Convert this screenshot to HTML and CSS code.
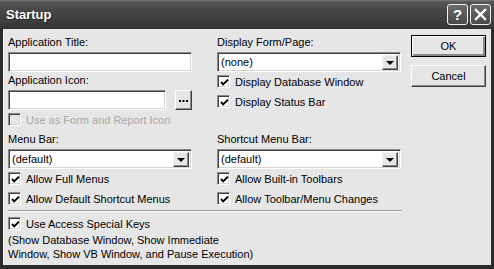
FILE: index.html
```html
<!DOCTYPE html>
<html lang="en">
<head>
    <meta charset="UTF-8">
    <title>Startup</title>
    <link rel="stylesheet" href="styles.css">
</head>
<body>
    <div class="window">
        <div class="titlebar">
            <span class="title">Startup</span>
            <div class="caption-buttons">
                <span class="cap-btn">?</span>
                <span class="cap-btn">
                    <svg width="13" height="13" viewBox="0 0 13 13">
                        <path d="M2 2 L11 11 M11 2 L2 11" stroke="#fff" stroke-width="2.4" stroke-linecap="square"/>
                    </svg>
                </span>
            </div>
        </div>

        <div class="client">
            <div class="main">
                <div class="cols">
                    <div class="col">
                        <div class="lbl">Application Title:</div>
                        <div class="field"></div>
                        <div class="lbl gap-sm">Application Icon:</div>
                        <div class="icon-row">
                            <div class="field"></div>
                            <span class="btn-dots">
                                <svg width="9" height="2" viewBox="0 0 9 2"><rect x="0" y="0" width="2" height="2"/><rect x="3.5" y="0" width="2" height="2"/><rect x="7" y="0" width="2" height="2"/></svg>
                            </span>
                        </div>
                        <div class="check disabled">
                            <span class="box"></span>Use as Form and Report Icon
                        </div>
                    </div>

                    <div class="col">
                        <div class="lbl">Display Form/Page:</div>
                        <div class="combo"><span class="val">(none)</span><span class="arrow"></span></div>
                        <div class="check first">
                            <span class="box checked"><svg width="9" height="9" viewBox="0 0 9 9"><path d="M1 4 L3.2 6.4 L8 1.6" fill="none" stroke="#000" stroke-width="2"/></svg></span>Display Database Window
                        </div>
                        <div class="check">
                            <span class="box checked"><svg width="9" height="9" viewBox="0 0 9 9"><path d="M1 4 L3.2 6.4 L8 1.6" fill="none" stroke="#000" stroke-width="2"/></svg></span>Display Status Bar
                        </div>
                    </div>

                    <div class="col">
                        <div class="lbl">Menu Bar:</div>
                        <div class="combo"><span class="val">(default)</span><span class="arrow"></span></div>
                        <div class="check first">
                            <span class="box checked"><svg width="9" height="9" viewBox="0 0 9 9"><path d="M1 4 L3.2 6.4 L8 1.6" fill="none" stroke="#000" stroke-width="2"/></svg></span>Allow Full Menus
                        </div>
                        <div class="check">
                            <span class="box checked"><svg width="9" height="9" viewBox="0 0 9 9"><path d="M1 4 L3.2 6.4 L8 1.6" fill="none" stroke="#000" stroke-width="2"/></svg></span>Allow Default Shortcut Menus
                        </div>
                    </div>

                    <div class="col">
                        <div class="lbl">Shortcut Menu Bar:</div>
                        <div class="combo"><span class="val">(default)</span><span class="arrow"></span></div>
                        <div class="check first">
                            <span class="box checked"><svg width="9" height="9" viewBox="0 0 9 9"><path d="M1 4 L3.2 6.4 L8 1.6" fill="none" stroke="#000" stroke-width="2"/></svg></span>Allow Built-in Toolbars
                        </div>
                        <div class="check">
                            <span class="box checked"><svg width="9" height="9" viewBox="0 0 9 9"><path d="M1 4 L3.2 6.4 L8 1.6" fill="none" stroke="#000" stroke-width="2"/></svg></span>Allow Toolbar/Menu Changes
                        </div>
                    </div>
                </div>

                <div class="sep"></div>

                <div class="check keys">
                    <span class="box checked"><svg width="9" height="9" viewBox="0 0 9 9"><path d="M1 4 L3.2 6.4 L8 1.6" fill="none" stroke="#000" stroke-width="2"/></svg></span>Use Access Special Keys
                </div>
                <p class="note">(Show Database Window, Show Immediate<br>Window, Show VB Window, and Pause Execution)</p>
            </div>

            <div class="buttons">
                <button class="btn default">OK</button>
                <button class="btn">Cancel</button>
            </div>
        </div>
    </div>
</body>
</html>
```

FILE: styles.css
```css
* {
    margin: 0;
    padding: 0;
    box-sizing: border-box;
}

body {
    font-family: "Liberation Sans", Arial, sans-serif;
    font-size: 11px;
    color: #000;
    background: #fff;
}

.window {
    width: 494px;
    height: 269px;
    display: flex;
    flex-direction: column;
    background: #2b2b2b;
}

/* title bar */
.titlebar {
    height: 29px;
    display: flex;
    align-items: center;
    justify-content: space-between;
    padding: 0 3px 0 6px;
    background: linear-gradient(to bottom, #7a7a7a 0px, #555 2px, #474747 10px, #3d3d3d 22px, #333 29px);
}

.title {
    color: #fff;
    font-weight: bold;
    font-size: 13px;
    text-shadow: 1px 1px 0 #222;
}

.caption-buttons {
    display: flex;
    gap: 2px;
}

.cap-btn {
    width: 21px;
    height: 21px;
    border: 1px solid #f2f2f2;
    border-radius: 3px;
    background: linear-gradient(to bottom, #6a6a6a, #4a4a4a);
    color: #fff;
    font-weight: bold;
    font-size: 15px;
    display: flex;
    align-items: center;
    justify-content: center;
}

/* client area */
.client {
    flex: 1;
    display: flex;
    background: #e6e6e6;
    margin: 0 3px 4px 3px;
    border-left: 1px solid #f4f4f4;
    padding: 7px 0 0 4px;
}

.main {
    width: 394px;
}

.cols {
    display: grid;
    grid-template-columns: 184px 184px;
    column-gap: 25px;
    row-gap: 7px;
    align-items: start;
}

.col {
    display: flex;
    flex-direction: column;
}

.lbl {
    height: 13px;
    line-height: 13px;
    margin-bottom: 3px;
}

.lbl.gap-sm {
    margin-top: 2px;
}

.field,
.combo {
    height: 20px;
    background: #fff;
    border: 1px solid;
    border-color: #8a8a8a #fff #fff #8a8a8a;
    box-shadow: inset 1px 1px 0 #404040, inset -1px -1px 0 #d6d6d6;
}

.icon-row {
    display: flex;
    align-items: center;
    gap: 9px;
}

.icon-row .field {
    width: 158px;
}

.btn-dots {
    width: 17px;
    height: 20px;
    margin-top: -1px;
    background: #e6e6e6;
    border: 1px solid;
    border-color: #fff #404040 #404040 #fff;
    box-shadow: inset -1px -1px 0 #8a8a8a;
    display: flex;
    align-items: center;
    justify-content: center;
}

.btn-dots svg {
    display: block;
    margin-top: 2px;
}

.combo {
    display: flex;
    align-items: center;
    justify-content: space-between;
    padding: 2px 2px 2px 3px;
}

.arrow {
    width: 16px;
    height: 15px;
    background: #e6e6e6;
    border: 1px solid;
    border-color: #f4f4f4 #404040 #404040 #f4f4f4;
    box-shadow: inset -1px -1px 0 #8a8a8a;
    position: relative;
}

.arrow::after {
    content: "";
    position: absolute;
    left: 3px;
    top: 5px;
    border-left: 4px solid transparent;
    border-right: 4px solid transparent;
    border-top: 4px solid #000;
}

/* checkboxes */
.check {
    display: flex;
    align-items: center;
    height: 13px;
    margin-top: 7px;
}

.check.first {
    margin-top: 3px;
}

.col:first-child .check.disabled {
    margin-top: 3px;
}

.box {
    width: 13px;
    height: 13px;
    margin-right: 5px;
    background: #fff;
    border: 1px solid;
    border-color: #8a8a8a #fff #fff #8a8a8a;
    box-shadow: inset 1px 1px 0 #404040, inset -1px -1px 0 #d6d6d6;
    display: flex;
    align-items: center;
    justify-content: center;
}

.box svg {
    display: block;
    margin: 1px 0 0 1px;
}

.check.disabled {
    color: #a6a6a6;
}

.check.disabled .box {
    background: #e6e6e6;
}

.sep {
    height: 2px;
    margin-top: 5px;
    border-top: 1px solid #9a9a9a;
    border-bottom: 1px solid #fff;
}

.check.keys {
    margin-top: 5px;
}

.note {
    margin-top: 3px;
    line-height: 14px;
}

/* command buttons */
.buttons {
    display: flex;
    flex-direction: column;
    gap: 8px;
    margin-left: 9px;
    margin-top: -1px;
}

.btn {
    width: 75px;
    height: 22px;
    font-family: "Liberation Sans", Arial, sans-serif;
    font-size: 11px;
    color: #000;
    background: #e6e6e6;
    border: 1px solid;
    border-color: #fff #404040 #404040 #fff;
    box-shadow: inset -1px -1px 0 #8a8a8a;
}

.btn.default {
    border: 1px solid #000;
    box-shadow: inset 1px 1px 0 #fff, inset -2px -2px 0 #8a8a8a, inset -1px -1px 0 #404040;
}
```
